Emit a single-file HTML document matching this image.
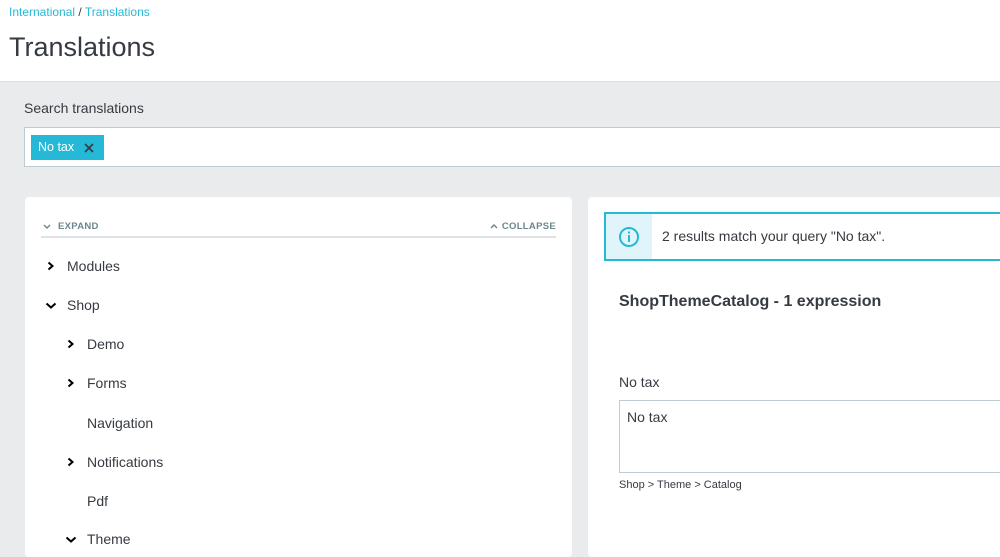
<!DOCTYPE html>
<html><head><style>
*{margin:0;padding:0;box-sizing:border-box}
body{width:1000px;height:545px;overflow:hidden;background:#eaebec;font-family:"Liberation Sans",sans-serif;color:#363a41;position:relative}
.hdr{position:absolute;left:0;top:0;width:1000px;height:82px;background:#fff;border-bottom:1px solid #dcdfe2}
.bc{position:absolute;left:9px;top:5px;font-size:12px;color:#25b9d7}
.bc span{color:#363a41}
h1{position:absolute;left:9px;top:32px;font-size:27px;font-weight:normal;color:#363a41}
.lbl{position:absolute;left:24px;top:100px;font-size:14px}
.search{position:absolute;left:24px;top:127px;width:990px;height:40px;background:#fff;border:1px solid #bbcdd2}
.tag{position:absolute;left:6px;top:7px;height:25px;width:73px;background:#25b9d7;color:#fff;font-size:12.5px;padding:5px 0 0 7px}
.panel{position:absolute;background:#fff;border-radius:4px;top:197px}
.l{left:25px;width:547px;height:360px}
.r{left:588px;width:420px;height:360px}
.tools{position:absolute;left:16px;right:16px;top:23px;height:18px;border-bottom:2px solid #dfe3e6;font-size:9.5px;font-weight:bold;color:#6c868e;letter-spacing:.3px}
.tools .e{position:absolute;left:17px;top:1px}
.tools .c{position:absolute;right:0;top:1px}
.it{position:absolute;font-size:14px;color:#363a41}
.alert{position:absolute;left:16px;top:15px;width:410px;height:49px;border:2px solid #25b9d7;background:#fff}
.alert .ic{position:absolute;left:0;top:0;width:46px;height:45px;background:#dff5f9}
.alert .t{position:absolute;left:56px;top:14px;font-size:14px}
</style></head><body>
<div class="hdr">
<div class="bc">International <span>/</span> Translations</div>
<h1>Translations</h1>
</div>
<div class="lbl">Search translations</div>
<div class="search"><div class="tag">No tax<svg style="position:absolute;left:53px;top:8px" width="10" height="10"><path d="M1 1 L9 9 M9 1 L1 9" stroke="#363a41" stroke-width="1.6"/></svg></div></div>
<div class="panel l">
<div class="tools"><svg style="position:absolute;left:2px;top:4px" width="8" height="6"><path d="M1 1 L4 4 L7 1" stroke="#6c868e" stroke-width="1.4" fill="none"/></svg><span class="e">EXPAND</span><svg style="position:absolute;right:58px;top:3px" width="8" height="6"><path d="M1 5 L4 2 L7 5" stroke="#6c868e" stroke-width="1.4" fill="none"/></svg><span class="c">COLLAPSE</span></div>
<svg style="position:absolute;left:22px;top:64px" width="8" height="10"><path d="M1.5 1.5 L5.5 5 L1.5 8.5" stroke="#000" stroke-width="2" fill="none"/></svg>
<div class="it" style="left:42px;top:61px">Modules</div>
<svg style="position:absolute;left:20px;top:105px" width="12" height="8"><path d="M1.5 1.5 L6 5.5 L10.5 1.5" stroke="#000" stroke-width="2" fill="none"/></svg>
<div class="it" style="left:42px;top:100px">Shop</div>
<svg style="position:absolute;left:42px;top:142px" width="8" height="10"><path d="M1.5 1.5 L5.5 5 L1.5 8.5" stroke="#000" stroke-width="2" fill="none"/></svg>
<div class="it" style="left:62px;top:139px">Demo</div>
<svg style="position:absolute;left:42px;top:181px" width="8" height="10"><path d="M1.5 1.5 L5.5 5 L1.5 8.5" stroke="#000" stroke-width="2" fill="none"/></svg>
<div class="it" style="left:62px;top:178px">Forms</div>
<div class="it" style="left:62px;top:218px">Navigation</div>
<svg style="position:absolute;left:42px;top:260px" width="8" height="10"><path d="M1.5 1.5 L5.5 5 L1.5 8.5" stroke="#000" stroke-width="2" fill="none"/></svg>
<div class="it" style="left:62px;top:257px">Notifications</div>
<div class="it" style="left:62px;top:296px">Pdf</div>
<svg style="position:absolute;left:40px;top:339px" width="12" height="8"><path d="M1.5 1.5 L6 5.5 L10.5 1.5" stroke="#000" stroke-width="2" fill="none"/></svg>
<div class="it" style="left:62px;top:334px">Theme</div>
</div>
<div class="panel r">
<div class="alert"><div class="ic"><svg style="position:absolute;left:12px;top:12px" width="22" height="22"><circle cx="11" cy="11" r="9" stroke="#25b9d7" stroke-width="2" fill="none"/><rect x="10" y="9" width="2" height="7" fill="#25b9d7"/><rect x="10" y="5.5" width="2" height="2" fill="#25b9d7"/></svg></div><div class="t">2 results match your query "No tax".</div></div>
<div style="position:absolute;left:31px;top:96px;font-size:16px;font-weight:bold">ShopThemeCatalog - 1 expression</div>
<div class="it" style="left:31px;top:177px">No tax</div>
<div style="position:absolute;left:31px;top:203px;width:400px;height:73px;border:1px solid #bbcdd2;font-size:14px;padding:8px 7px">No tax</div>
<div style="position:absolute;left:31px;top:282px;font-size:11px">Shop &gt; Theme &gt; Catalog</div>
</div>
</body></html>
